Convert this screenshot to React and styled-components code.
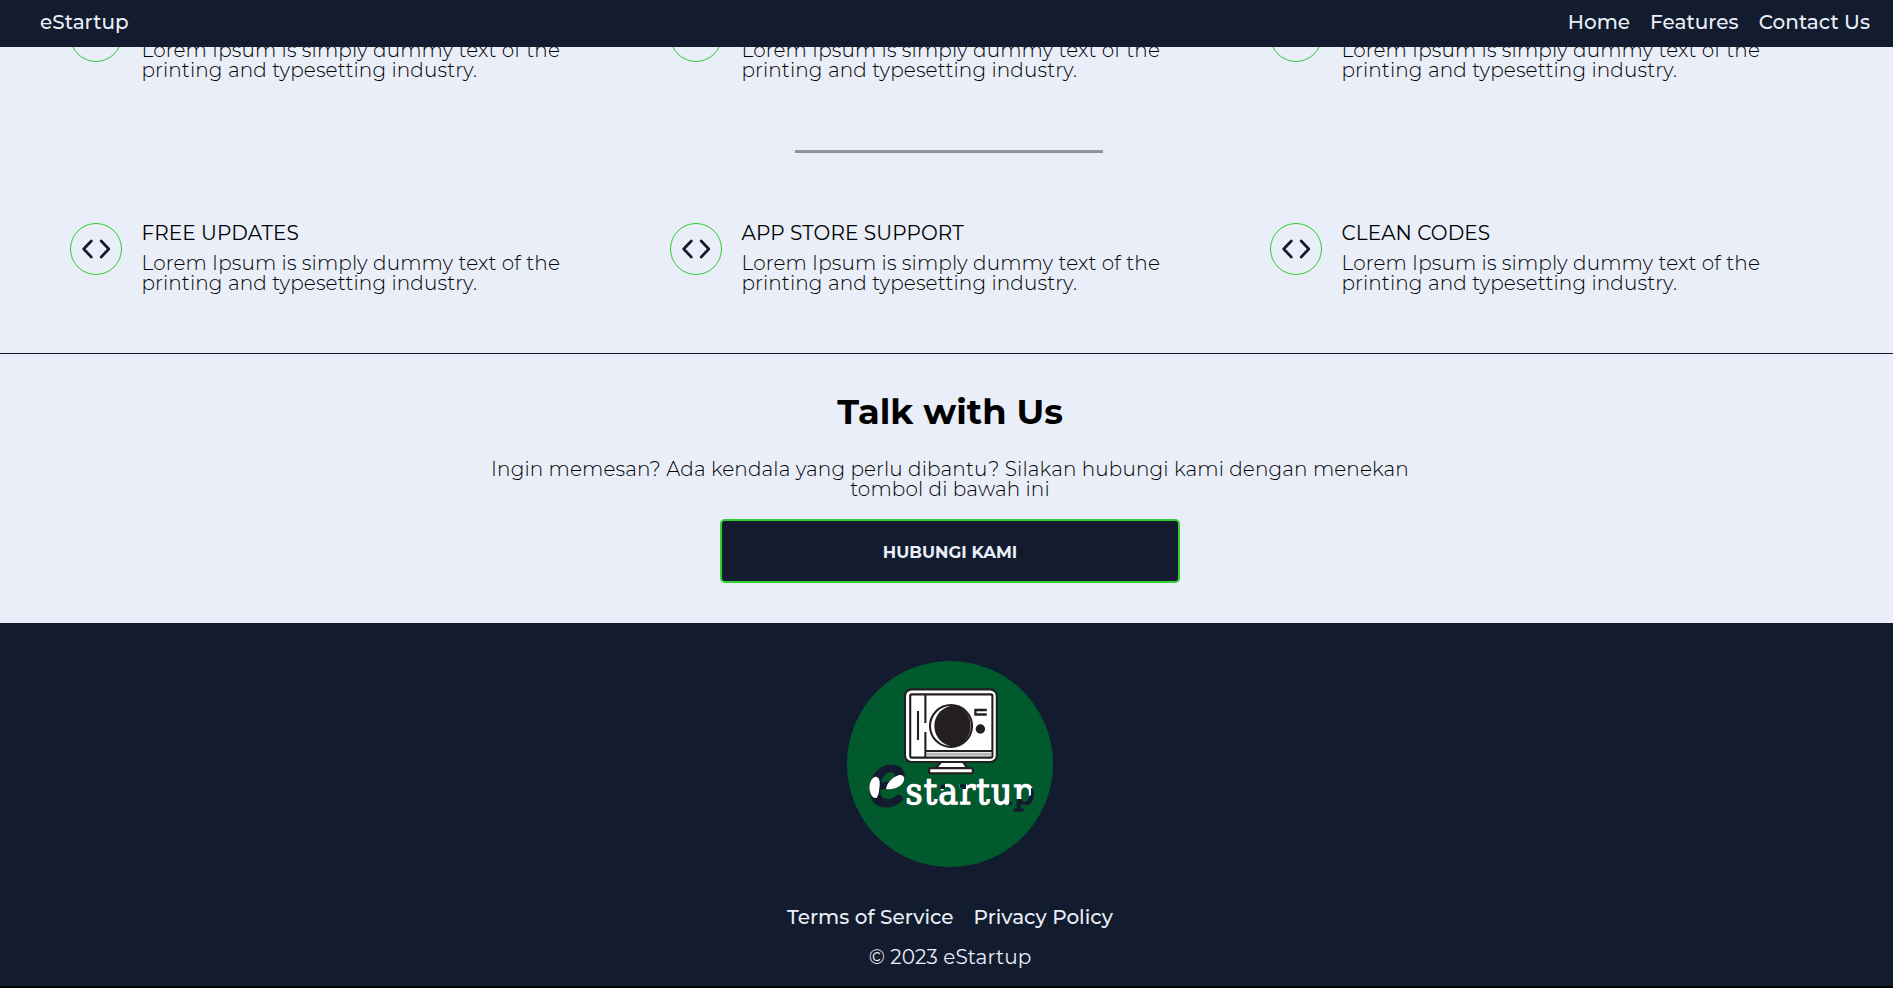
import React from "react";
import styled, { createGlobalStyle } from "styled-components";

const navy = "#131b2e";
const pale = "#e9eef8";
const lime = "#32cd32";

const GlobalStyle = createGlobalStyle`
  * { box-sizing: border-box; margin: 0; padding: 0; }
  html, body { background: #000; overflow: hidden; }
  body {
    font-family: Montserrat, Inter, "Liberation Sans", sans-serif;
    font-size: 20px;
    line-height: 20px;
    letter-spacing: 0.1px;
  }
`;

const Viewport = styled.div`
  height: 988px;
  overflow: hidden;
`;

const Navbar = styled.nav`
  position: fixed;
  top: 0;
  left: 0;
  right: 0;
  z-index: 1;
  height: 47px;
  padding: 0 23px 3px 40px;
  display: flex;
  align-items: center;
  justify-content: space-between;
  background: ${navy};
`;

const NavLinks = styled.div`
  display: flex;
  gap: 20px;
`;

const Link = styled.a`
  color: ${pale};
  font-weight: 500;
  letter-spacing: 0.03px;
  white-space: nowrap;
`;

const Page = styled.div`
  width: 1900px;
`;

const Features = styled.section`
  padding: 10px 50px 60px;
  background: ${pale};
  border-bottom: 1px solid ${navy};
`;

const FeatureRow = styled.div`
  display: grid;
  grid-template-columns: repeat(3, 600px);
`;

const Feature = styled.article`
  display: flex;
  gap: 19.5px;
  height: 70px;
  padding-left: 20px;
`;

const IconRing = styled.div`
  flex: none;
  display: flex;
  align-items: center;
  justify-content: center;
  width: 52px;
  height: 52px;
  border: 1px solid ${lime};
  border-radius: 50%;
`;

const FeatureText = styled.div`
  display: grid;
  grid-template-rows: 20px 40px;
  gap: 10px;
  width: 440px;
`;

const FeatureTitle = styled.h3`
  font-size: 20px;
  font-weight: 400;
  color: #000;
`;

const Copy = styled.p`
  font-weight: 300;
  color: #000;
  letter-spacing: 0.12px;
`;

const Rule = styled.hr`
  width: 308px;
  height: 3px;
  margin: 70px 0 70px 745px;
  border: 0;
  border-top: 1px solid #999;
  background: #8992a0;
`;

const Contact = styled.section`
  display: flex;
  flex-direction: column;
  align-items: center;
  padding: 40px 0;
  background: ${pale};
  text-align: center;
`;

const Heading = styled.h2`
  font-size: 35.2px;
  line-height: 36px;
  font-weight: 700;
  letter-spacing: 0;
  margin-bottom: 29px;
`;

const ContactButton = styled.button`
  width: 460px;
  height: 64px;
  margin-top: 20px;
  padding-top: 1px;
  border: 2px solid ${lime};
  border-radius: 5px;
  background: ${navy};
  color: ${pale};
  font: 700 16.6px/20px Montserrat, Inter, sans-serif;
`;

const Footer = styled.footer`
  display: flex;
  flex-direction: column;
  align-items: center;
  height: 363px;
  padding-top: 38px;
  background: ${navy};
`;

const FooterLinks = styled.div`
  display: flex;
  gap: 20px;
  margin: 40px 0 20px;
`;

const Copyright = styled.p`
  color: ${pale};
`;

const CodeIcon = () => (
  <svg width="30" height="20" viewBox="0 0 30 20" fill="none" stroke={navy} strokeWidth="2.7" strokeLinecap="round" strokeLinejoin="round">
    <path d="M10.3 2 L2.7 10 L10.3 18 M20.2 2 L27.8 10 L20.2 18" />
  </svg>
);

const word = {
  x: 58.5,
  y: 143,
  textLength: 130.5,
  lengthAdjust: "spacingAndGlyphs",
  letterSpacing: 1.2,
  fontFamily: "DejaVu Serif",
  fontWeight: 400,
  fontSize: 35,
  strokeWidth: 1.3,
};

const Logo = () => (
  <svg width="206" height="206" viewBox="0 0 206 206">
    <defs>
      <clipPath id="lit">
        <path d="M56 115 H92 V128 H98 V147 H56 Z M98 115 H113 V128 H119 V115 H188 V127 H184 V134 L176 138 H168 L163 139 L160 147 H98 Z" />
      </clipPath>
    </defs>
    <circle cx="103" cy="103" r="103" fill="#005a2d" />
    <g stroke="#231f20" strokeWidth="2.1" fill="#fff">
      <path d="M94 101 H116 L120 107 H89 Z" />
      <rect x="82.2" y="107.2" width="43.6" height="5" rx="1" />
      <rect x="58" y="28.4" width="91.8" height="72.6" rx="6.5" />
      <rect x="63.2" y="33.4" width="82.2" height="63.2" rx="1.5" />
      <path fill="none" d="M78.4 33.5 V62 M78.4 71 V96 M78.4 90 H145 M71 50 V79" />
      <circle cx="104" cy="65" r="21" />
      <path fill="none" strokeWidth="2.3" d="M139.8 49 H128.4 V53.5 H139.8" />
    </g>
    <path d="M79.5 93.3 H144.4" stroke="#b5b5b5" strokeWidth="3" />
    <g fill="#231f20">
      <path d="M108 44.3 A21.5 21.5 0 0 1 108 85.7 A20.7 20.7 0 0 1 108 44.3 Z" />
      <circle cx="133.4" cy="68" r="4.7" />
    </g>
    <text x="21" y="146" textLength="39" lengthAdjust="spacingAndGlyphs" fontFamily="Lato" fontStyle="italic" fontWeight="900" fontSize="82" fill={navy}>e</text>
    <path d="M27.5 116 C31.5 115 33.5 119 32.5 126 C31.8 129 32.5 133 29.5 137 C25 138 22 131 22.5 125 C23 120 25 117 27.5 116 Z" fill="#fff" />
    <path d="M39 128 C40 121 46 116 52 114 C58 113 59 119 54 124 C49 128 43 129 39 128 Z" fill="#fff" />
    <text {...word} fill={navy} stroke={navy}>startup</text>
    <text {...word} fill="#fff" stroke="#fff" clipPath="url(#lit)">startup</text>
  </svg>
);

const Item = ({ title }) => (
  <Feature>
    <IconRing>
      <CodeIcon />
    </IconRing>
    <FeatureText>
      <FeatureTitle>{title}</FeatureTitle>
      <Copy>
        Lorem Ipsum is simply dummy text of the
        <br />
        printing and typesetting industry.
      </Copy>
    </FeatureText>
  </Feature>
);

export default function App() {
  return (
    <Viewport>
      <GlobalStyle />
      <Navbar>
        <Link>eStartup</Link>
        <NavLinks>
          <Link>Home</Link>
          <Link>Features</Link>
          <Link>Contact Us</Link>
        </NavLinks>
      </Navbar>
      <Page>
        <Features>
          <FeatureRow>
            <Item />
            <Item />
            <Item />
          </FeatureRow>
          <Rule />
          <FeatureRow>
            <Item title="FREE UPDATES" />
            <Item title="APP STORE SUPPORT" />
            <Item title="CLEAN CODES" />
          </FeatureRow>
        </Features>
        <Contact>
          <Heading>Talk with Us</Heading>
          <Copy>
            Ingin memesan? Ada kendala yang perlu dibantu? Silakan hubungi kami dengan menekan
            <br />
            tombol di bawah ini
          </Copy>
          <ContactButton>HUBUNGI KAMI</ContactButton>
        </Contact>
        <Footer>
          <Logo />
          <FooterLinks>
            <Link>Terms of Service</Link>
            <Link>Privacy Policy</Link>
          </FooterLinks>
          <Copyright>© 2023 eStartup</Copyright>
        </Footer>
      </Page>
    </Viewport>
  );
}
